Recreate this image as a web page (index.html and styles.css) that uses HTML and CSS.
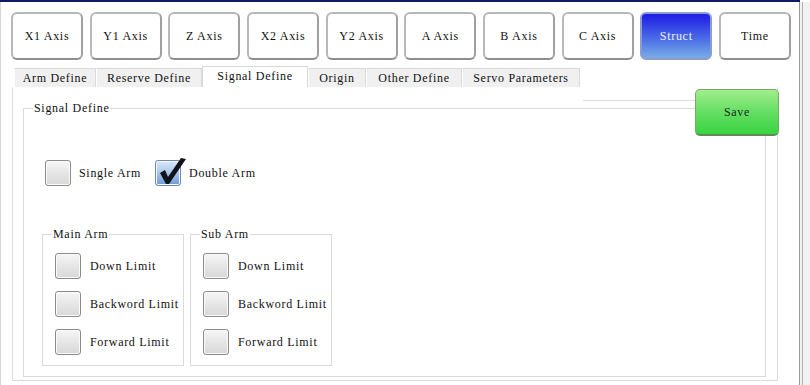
FILE: index.html
```html
<!DOCTYPE html>
<html>
<head>
<meta charset="utf-8">
<link rel="stylesheet" href="styles.css">
</head>
<body>
<div class="topline"></div>
<div class="window">
  <div class="main">
    <div class="axes">
      <div class="btn">X1 Axis</div>
      <div class="btn">Y1 Axis</div>
      <div class="btn">Z Axis</div>
      <div class="btn">X2 Axis</div>
      <div class="btn">Y2 Axis</div>
      <div class="btn">A Axis</div>
      <div class="btn">B Axis</div>
      <div class="btn">C Axis</div>
      <div class="btn active">Struct</div>
      <div class="btn">Time</div>
    </div>
    <div class="tabs">
      <div class="tab w82">Arm Define</div>
      <div class="tab w106">Reserve Define</div>
      <div class="tab w106 selected">Signal Define</div>
      <div class="tab w58">Origin</div>
      <div class="tab w96">Other Define</div>
      <div class="tab w118">Servo Parameters</div>
    </div>
    <div class="pane">
      <div class="group signal">
        <span class="legend">Signal Define</span>
        <div class="modes">
          <div class="check"><span class="box"></span><span>Single Arm</span></div>
          <div class="check"><span class="box checked"><svg class="tick" width="30" height="30" viewBox="0 0 30 30"><path d="M3 16 L8 13 L11 20 L24 1 L29 2 L12 27 L9 27 Z" fill="#101418"/></svg></span><span>Double Arm</span></div>
        </div>
        <div class="subgroups">
          <div class="group sub">
            <span class="legend">Main Arm</span>
            <div class="check"><span class="box"></span><span>Down Limit</span></div>
            <div class="check"><span class="box"></span><span>Backword Limit</span></div>
            <div class="check"><span class="box"></span><span>Forward Limit</span></div>
          </div>
          <div class="group sub">
            <span class="legend">Sub Arm</span>
            <div class="check"><span class="box"></span><span>Down Limit</span></div>
            <div class="check"><span class="box"></span><span>Backword Limit</span></div>
            <div class="check"><span class="box"></span><span>Forward Limit</span></div>
          </div>
        </div>
      </div>
    </div>
    <div class="paneline"></div>
    <div class="save">Save</div>
  </div>
  <div class="rightstrip"><div class="rs-inner"></div></div>
</div>
</body>
</html>
```

FILE: styles.css
```css
* { box-sizing: border-box; }
html, body {
  margin: 0;
  padding: 0;
  width: 810px;
  height: 385px;
  overflow: hidden;
  background: #ffffff;
  font-family: "Liberation Serif", "DejaVu Serif", serif;
  font-size: 12px;
  letter-spacing: 0.7px;
  color: #111;
}
.topline {
  width: 800px;
  height: 2px;
  background: #101a66;
}
.window {
  display: flex;
  height: 383px;
}
.main {
  position: relative;
  width: 799px;
  height: 383px;
  border-left: 1px solid #d4d4d4;
}
.axes {
  display: flex;
  gap: 6.67px;
  padding: 10px 0 0 10px;
}
.btn {
  width: 72px;
  height: 48px;
  display: flex;
  align-items: center;
  justify-content: center;
  border: 2px solid #b8b8b8;
  border-bottom-color: #8e8e8e;
  border-right-color: #a0a0a0;
  border-radius: 6px;
  background: #ffffff;
}
.btn.active {
  background: linear-gradient(#1c1ce4, #4a6ae6 55%, #78aee6);
  border-color: #8c9cd0;
  color: #eef0ff;
}
.tabs {
  display: flex;
  align-items: flex-end;
  height: 21px;
  margin-top: 6px;
  padding-left: 13px;
}
.tab {
  height: 19px;
  display: flex;
  align-items: center;
  justify-content: center;
  background: #f0f0f0;
  border: 1px solid #dadada;
  border-bottom: none;
  border-left-color: #ffffff;
  white-space: nowrap;
}
.w82 { width: 82px; }
.w106 { width: 106px; }
.w58 { width: 58px; }
.w96 { width: 96px; }
.w118 { width: 118px; }
.tab.selected {
  height: 21px;
  padding-bottom: 2px;
  background: #ffffff;
  border-color: #d8d8d8;
}
.pane {
  margin-left: 11px;
  width: 766px;
  height: 294px;
  border: 1px solid #dcdcdc;
  border-top-color: transparent;
}
.paneline {
  position: absolute;
  left: 582px;
  top: 98px;
  width: 113px;
  height: 1px;
  background: #dedede;
}
.group {
  position: relative;
  border: 1px solid #dadada;
}
.legend {
  position: absolute;
  top: -8px;
  left: 9px;
  background: #ffffff;
  padding: 0 1px;
  line-height: 14px;
}
.group.signal {
  margin: 20px 0 0 10px;
  width: 743px;
  height: 269px;
  padding: 51px 0 0 21px;
}
.modes {
  display: flex;
  gap: 14px;
}
.check {
  display: flex;
  align-items: center;
  gap: 8px;
  white-space: nowrap;
}
.box {
  position: relative;
  flex: none;
  width: 26px;
  height: 26px;
  border: 1px solid #8c8c8c;
  border-radius: 3px;
  background: linear-gradient(#f6f6f6, #e6e6e6 50%, #d8d8d8);
  box-shadow: inset 0 0 0 1px #fafafa;
}
.box.checked {
  background: linear-gradient(#dbe8f8, #a8c6ec 50%, #6c9ad6);
  border-color: #6a88b0;
}
.tick {
  position: absolute;
  left: 1px;
  top: -4px;
}
.subgroups {
  display: flex;
  gap: 6px;
  margin: 48px 0 0 -3px;
}
.group.sub {
  width: 142px;
  height: 132px;
  padding: 18px 0 0 12px;
  display: flex;
  flex-direction: column;
  gap: 12px;
}
.group.sub .check { gap: 9px; }
.save {
  position: absolute;
  left: 694px;
  top: 87px;
  width: 84px;
  height: 47px;
  display: flex;
  align-items: center;
  justify-content: center;
  border: 1px solid #78a86c;
  border-bottom: 2px solid #5e8a56;
  border-radius: 5px;
  background: linear-gradient(#a2ee8c, #6ae068 45%, #38d440);
  color: #1c2a1c;
}
.rightstrip {
  width: 11px;
  height: 383px;
  border-left: 1px solid #9a9a9a;
  background: #f2f2f2;
  padding-left: 2px;
}
.rs-inner {
  height: 100%;
  border-left: 1px solid #b0b0b0;
}
```
